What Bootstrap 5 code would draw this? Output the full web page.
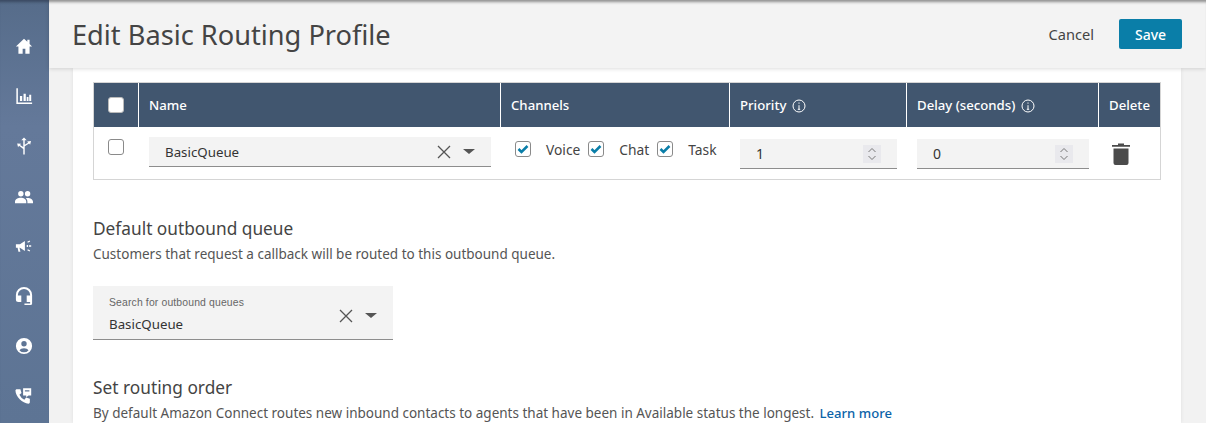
<!DOCTYPE html>
<html lang="en">
<head>
<meta charset="utf-8">
<title>Edit Basic Routing Profile</title>
<link rel="stylesheet" href="https://cdn.jsdelivr.net/npm/bootstrap@5.3.0/dist/css/bootstrap.min.css">
<style>
html,body{height:423px;overflow:hidden;}
body{font-family:"Noto Sans","Open Sans",sans-serif;background:#f2f2f2;color:#444;font-size:14px;}
.shell{height:423px;overflow:hidden;}
.rail{width:49px;flex:none;background:linear-gradient(#566c8a,#64799a 30%,#5d7494);box-shadow:inset 0 4px 3px -2px rgba(40,50,70,.6);padding-top:35px;gap:28px;}
.rail svg{width:18px;height:22px;fill:#fff;display:block;margin-right:1px;}
.main-col{min-width:0;}
.topbar{height:68px;flex:none;background:#f3f3f3;padding:2px 24px 0 23px;box-shadow:inset 0 4px 3px -2px rgba(60,60,60,.55),0 1px 4px rgba(0,0,0,.14);position:relative;z-index:2;}
.topbar h1{font-size:27.2px;font-weight:400;margin:0;color:#444;line-height:1;}
.cancel-link{font-size:14.6px;color:#444;margin-right:25px;}
.save-btn{background:#0a7ea8;color:#fff;border:0;border-radius:2px;width:63px;height:30px;font-size:14px;font-weight:500;padding:0;margin-top:-2px;}
.panel{background:#fff;margin:0 25px 0 24px;flex:1;padding:14px 20px 0 20px;box-shadow:0 0 4px rgba(0,0,0,.08);}
.route-table{width:1068px;table-layout:fixed;border:1px solid #d5d5d5;border-collapse:separate;border-spacing:0;margin:0;}
.route-table th{background:#41566f;color:#fff;font-size:13.2px;font-weight:500;height:44px;padding:2px 0 0 10px;border-left:1px solid #fff;vertical-align:middle;white-space:nowrap;}
.route-table th:first-child{border-left:0;}
.route-table td{height:52px;padding:0;vertical-align:top;}
.tick{width:16px;height:16px;border:1px solid #8a8a8a;border-radius:3px;background:#fff;display:block;flex:none;}
.tick svg{display:block;width:14px;height:14px;}
.tick-head{margin:0 0 0 14px;border-color:#bbb;}
.tick-row{margin:12px 0 0 14px;}
.field{background:#f3f3f3;border-bottom:1px solid #8d8d8d;}
.name-field{height:30px;margin:10px 9px 0 11px;padding:0 16px 0 16px;font-size:13.3px;color:#333;}
.name-text{padding-top:2px;}
.x-icon{width:14px;height:14px;stroke:#555;stroke-width:1.3;fill:none;flex:none;}
.caret-icon{width:0;height:0;border-left:6px solid transparent;border-right:6px solid transparent;border-top:5.5px solid #555;margin-left:12px;flex:none;}
.chan{padding-top:14px;font-size:13.8px;color:#444;}
.chan .tick{margin-right:15px;}
.chan .first-box{margin-left:15px;}
.chan span.lbl{line-height:18px;margin-right:8px;margin-top:0;}
.num-field{height:30px;margin:12px 9px 0 11px;padding:0 16px 0 16px;font-size:14px;color:#333;}
.spin{width:18px;height:18px;background:#e9e9ed;}
.spin svg{display:block;width:18px;height:18px;fill:none;stroke:#777;stroke-width:1;}
.info-ic{width:14px;height:14px;margin-left:2px;vertical-align:-3px;}
.sec-title{font-size:17.3px;font-weight:400;color:#444;margin:0 0 4px;line-height:24px;}
.sec-sub{font-size:13.5px;color:#555;margin:0;line-height:18px;}
.sec-sub a{color:#0b63a8;text-decoration:none;font-weight:500;font-size:13.1px;margin-left:2px;}
.outbound{width:300px;height:54px;padding:6px 16px 0 16px;margin:23px 0 0;}
.outbound small{display:block;font-family:"Liberation Sans",sans-serif;font-size:10.4px;color:#666;line-height:12px;letter-spacing:.15px;}
.outbound b{display:block;font-weight:400;font-size:13.3px;color:#333;line-height:20px;margin-top:5px;}
.trash{width:20px;height:24px;fill:#4b4b4b;display:block;margin:15px 0 0 13px;}
.gap-routing{margin-top:36px;}
.gap-default{margin-top:37px;}
</style>
</head>
<body>
<div class="shell d-flex">
  <nav class="rail d-flex flex-column align-items-center" aria-label="Main">
    <svg viewBox="0 0 20 22"><path d="M10 3 1 11.500H3.800V19.500h4.700v-5.500h3v5.500h4.700v-8H19L16.200 8.800V4h-2.500v2.400z"/></svg>
    <svg viewBox="0 0 20 22"><path d="M1.500 2.500h1.700v15.800H19V20H1.500zM5.500 11h2.500v5.500H5.500zM9.500 8.500H12v8H9.500zM13 12h2v4.500h-2zM15.800 9.500H18v7h-2.200z"/></svg>
    <svg viewBox="0 0 20 22"><path d="M10 1.500l3 3.200h-2.200v5l3.700-2.300-1-1.500 4.300-.4-1 4.200-1.100-1.500-4.900 3.200V20.500H9.200v-6.300L4.500 10.800l-1.100 1.500-1-4.200 4.300.4-1 1.500 3.500 2.200V4.700H7z"/></svg>
    <svg viewBox="0 0 20 22"><path d="M6.500 5.500a3 3 0 1 1 0 6 3 3 0 0 1 0-6zm7.500 0a3 3 0 1 1 0 6 3 3 0 0 1 0-6zM0 17.500c0-3 3.500-4.500 6.500-4.500s6 1.500 6 4.500V19H0zm13.800 1.500v-1.500c0-1.700-.7-3-1.800-3.900.7-.3 1.400-.5 2.200-.5 2.800 0 5.800 1.400 5.800 4.400V19z"/></svg>
    <svg viewBox="0 0 20 22"><path d="M1 9h4.500L11 5.500v11L5.500 13H5l1 4.500H3.800L2.900 13H1zM13 10h1.500v2H13zM13.600 6.400l2.600-1.500.7 1.100-2.600 1.500zM13.600 15.600l.7-1.100 2.600 1.500-.7 1.100zM15.500 10.300H18v1.400h-2.500z"/></svg>
    <svg viewBox="0 0 20 22"><path d="M10 1a9 9 0 0 0-9 9v5a2.800 2.800 0 0 0 2.800 2.800H7V10.500H3.200V10a6.800 6.800 0 0 1 13.600 0v.5H13v7.300h3.800v1.400H10.500V21h6.700a1.800 1.800 0 0 0 1.800-1.800V10a9 9 0 0 0-9-9z"/></svg>
    <svg viewBox="0 0 20 22"><path fill-rule="evenodd" d="M10 2a9 9 0 1 1 0 18 9 9 0 0 1 0-18zm0 3.500a3 3 0 1 0 0 6 3 3 0 0 0 0-6zm0 8c-2.200 0-4.200 1-5 2.400a6.900 6.900 0 0 0 10 0c-.8-1.400-2.800-2.400-5-2.400z"/></svg>
    <svg viewBox="0 0 20 22"><path d="M2 3.500h4l1.200 4.200-2.300 1.900a11 11 0 0 0 5.500 5.500l1.900-2.300 4.200 1.200v4c0 .8-.7 1.500-1.500 1.500C8.300 19.500.5 11.700.5 5c0-.8.7-1.500 1.500-1.500zM9 2.500h9v8h-3l-2.500 2v-2H9zm2 2v1.500h5V4.500z"/></svg>
  </nav>
  <div class="main-col flex-grow-1 d-flex flex-column">
    <header class="topbar d-flex align-items-center justify-content-between">
      <h1>Edit Basic Routing Profile</h1>
      <div class="d-flex align-items-center">
        <span class="cancel-link">Cancel</span>
        <button type="button" class="btn save-btn">Save</button>
      </div>
    </header>
    <main class="panel">
      <table class="route-table">
        <colgroup><col style="width:44px"><col style="width:362px"><col style="width:229px"><col style="width:177px"><col style="width:192px"><col style="width:62px"></colgroup>
        <thead>
          <tr>
            <th class="p-0"><span class="tick tick-head"></span></th>
            <th>Name</th>
            <th>Channels</th>
            <th>Priority <svg class="info-ic" viewBox="0 0 14 14" fill="none" stroke="#fff"><circle cx="7" cy="7" r="6"/><path d="M7 6.200v4M5.800 10.300h2.400M7 3.500v1.200"/></svg></th>
            <th>Delay (seconds) <svg class="info-ic" viewBox="0 0 14 14" fill="none" stroke="#fff"><circle cx="7" cy="7" r="6"/><path d="M7 6.200v4M5.800 10.300h2.400M7 3.500v1.200"/></svg></th>
            <th>Delete</th>
          </tr>
        </thead>
        <tbody>
          <tr>
            <td><span class="tick tick-row"></span></td>
            <td>
              <div class="field name-field d-flex align-items-center">
                <span class="flex-grow-1 name-text">BasicQueue</span>
                <svg class="x-icon" viewBox="0 0 14 14"><path d="M1 1l12 12M13 1 1 13"/></svg>
                <span class="caret-icon"></span>
              </div>
            </td>
            <td>
              <div class="chan d-flex">
                <span class="tick first-box"><svg viewBox="0 0 14 14"><path d="M2.500 7l3 3 6-6" fill="none" stroke="#0a7ea8" stroke-width="2.500"/></svg></span><span class="lbl">Voice</span>
                <span class="tick"><svg viewBox="0 0 14 14"><path d="M2.500 7l3 3 6-6" fill="none" stroke="#0a7ea8" stroke-width="2.500"/></svg></span><span class="lbl">Chat</span>
                <span class="tick"><svg viewBox="0 0 14 14"><path d="M2.500 7l3 3 6-6" fill="none" stroke="#0a7ea8" stroke-width="2.500"/></svg></span><span class="lbl">Task</span>
              </div>
            </td>
            <td>
              <div class="field num-field d-flex align-items-center justify-content-between">
                <span>1</span>
                <span class="spin"><svg viewBox="0 0 18 18"><path d="M5.500 7 9 3.500 12.500 7M5.500 11 9 14.500 12.500 11"/></svg></span>
              </div>
            </td>
            <td>
              <div class="field num-field d-flex align-items-center justify-content-between">
                <span>0</span>
                <span class="spin"><svg viewBox="0 0 18 18"><path d="M5.500 7 9 3.500 12.500 7M5.500 11 9 14.500 12.500 11"/></svg></span>
              </div>
            </td>
            <td>
              <svg class="trash" viewBox="0 0 20 24"><path d="M7 1.500h6V3h6v1.800H1V3h6zM2.500 6.500h15V21a2 2 0 0 1-2 2h-11a2 2 0 0 1-2-2z"/></svg>
            </td>
          </tr>
        </tbody>
      </table>
      <section class="gap-default">
        <h2 class="sec-title">Default outbound queue</h2>
        <p class="sec-sub">Customers that request a callback will be routed to this outbound queue.</p>
        <div class="field outbound d-flex align-items-center">
          <div class="flex-grow-1">
            <small>Search for outbound queues</small>
            <b>BasicQueue</b>
          </div>
          <svg class="x-icon" viewBox="0 0 14 14"><path d="M1 1l12 12M13 1 1 13"/></svg>
          <span class="caret-icon"></span>
        </div>
      </section>
      <section class="gap-routing">
        <h2 class="sec-title">Set routing order</h2>
        <p class="sec-sub">By default Amazon Connect routes new inbound contacts to agents that have been in Available status the longest. <a href="#">Learn more</a></p>
      </section>
    </main>
  </div>
</div>
<script src="https://cdn.jsdelivr.net/npm/bootstrap@5.3.0/dist/js/bootstrap.bundle.min.js"></script>
</body>
</html>
